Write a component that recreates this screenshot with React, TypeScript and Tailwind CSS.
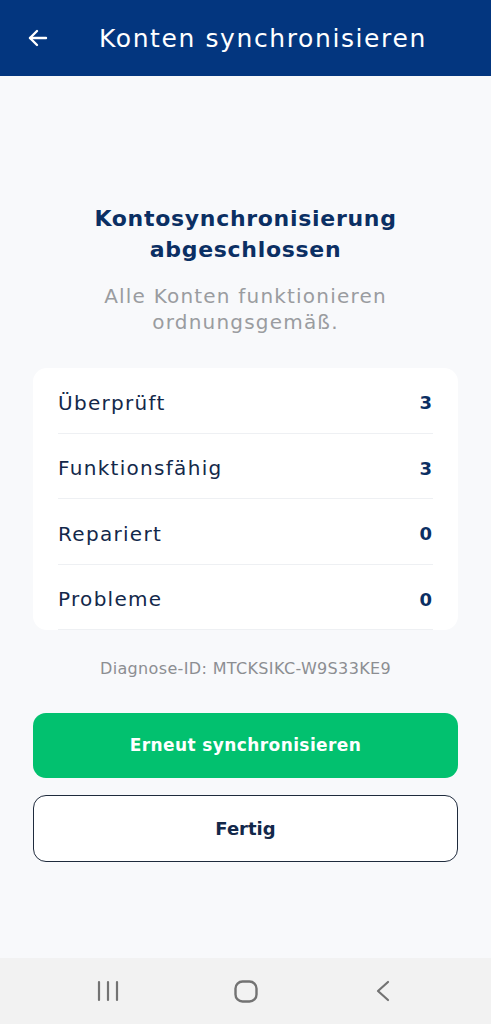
import React from "react";

const rows = [
  { label: "Überprüft", value: "3" },
  { label: "Funktionsfähig", value: "3" },
  { label: "Repariert", value: "0" },
  { label: "Probleme", value: "0" },
];

export default function App() {
  return (
    <div
      className="w-[491px] h-[1024px] flex flex-col bg-[#f8f9fb] overflow-hidden"
      style={{ fontFamily: '"DejaVu Sans", "Noto Sans", sans-serif' }}
    >
      <header className="h-[76px] shrink-0 bg-[#03367f] flex items-center pl-[26px]">
        <svg width="24" height="24" viewBox="0 0 24 24" fill="none" stroke="white" strokeWidth="2.4" strokeLinecap="round" strokeLinejoin="round">
          <path d="M20 12H4" />
          <path d="M11 5l-7 7 7 7" />
        </svg>
        <h1 className="ml-[49px] text-white text-[25px] leading-none tracking-[1.6px]">Konten synchronisieren</h1>
      </header>

      <main className="flex-1 flex flex-col px-[33px] pt-[127px]">
        <h2 className="text-center text-[#0b2f63] font-bold text-[22px] leading-[31px] tracking-[0.7px]">
          Kontosynchronisierung
          <br />
          abgeschlossen
        </h2>
        <p className="mt-[18px] text-center text-[#9a9ca0] text-[20px] leading-[26px] tracking-[1.2px]">
          Alle Konten funktionieren
          <br />
          ordnungsgemäß.
        </p>

        <div className="mt-[33px] bg-white rounded-[14px] px-[25px]">
          {rows.map((r) => (
            <div key={r.label} className="h-[65.5px] pt-[5px] flex items-center justify-between border-b border-[#eef0f3]">
              <span className="text-[20px] tracking-[1.3px] text-[#13284a]">{r.label}</span>
              <span className="text-[18px] font-bold text-[#0b2f63] mr-[1px]">{r.value}</span>
            </div>
          ))}
        </div>

        <p className="mt-[27px] text-center text-[16px] tracking-[0.35px] text-[#8c8e92]">Diagnose-ID: MTCKSIKC-W9S33KE9</p>

        <button className="mt-[32px] h-[65px] rounded-[13px] bg-[#02c16f] text-white font-bold text-[17px] tracking-[0.4px]">
          Erneut synchronisieren
        </button>
        <button className="mt-[17px] h-[67px] rounded-[13px] bg-white border-[1.5px] border-[#1f2b3d] text-[#13284a] font-bold text-[18px]">
          Fertig
        </button>
      </main>

      <nav className="h-[66px] shrink-0 bg-[#f2f2f2] flex items-center px-[39px]">
        <div className="w-[138px] flex justify-center">
          <svg width="22" height="22" viewBox="0 0 22 22" fill="none" stroke="#737373" strokeWidth="2.2" strokeLinecap="round">
            <path d="M2 2v18M11 2v18M20 2v18" />
          </svg>
        </div>
        <div className="w-[138px] flex justify-center">
          <svg width="24" height="23" viewBox="0 0 24 23" fill="none" stroke="#737373" strokeWidth="2.4">
            <rect x="1.5" y="1.5" width="21" height="20" rx="7" />
          </svg>
        </div>
        <div className="w-[138px] flex justify-center">
          <svg width="14" height="22" viewBox="0 0 14 22" fill="none" stroke="#737373" strokeWidth="2.2" strokeLinecap="round" strokeLinejoin="round">
            <path d="M12 2L2 11l10 9" />
          </svg>
        </div>
      </nav>
    </div>
  );
}
